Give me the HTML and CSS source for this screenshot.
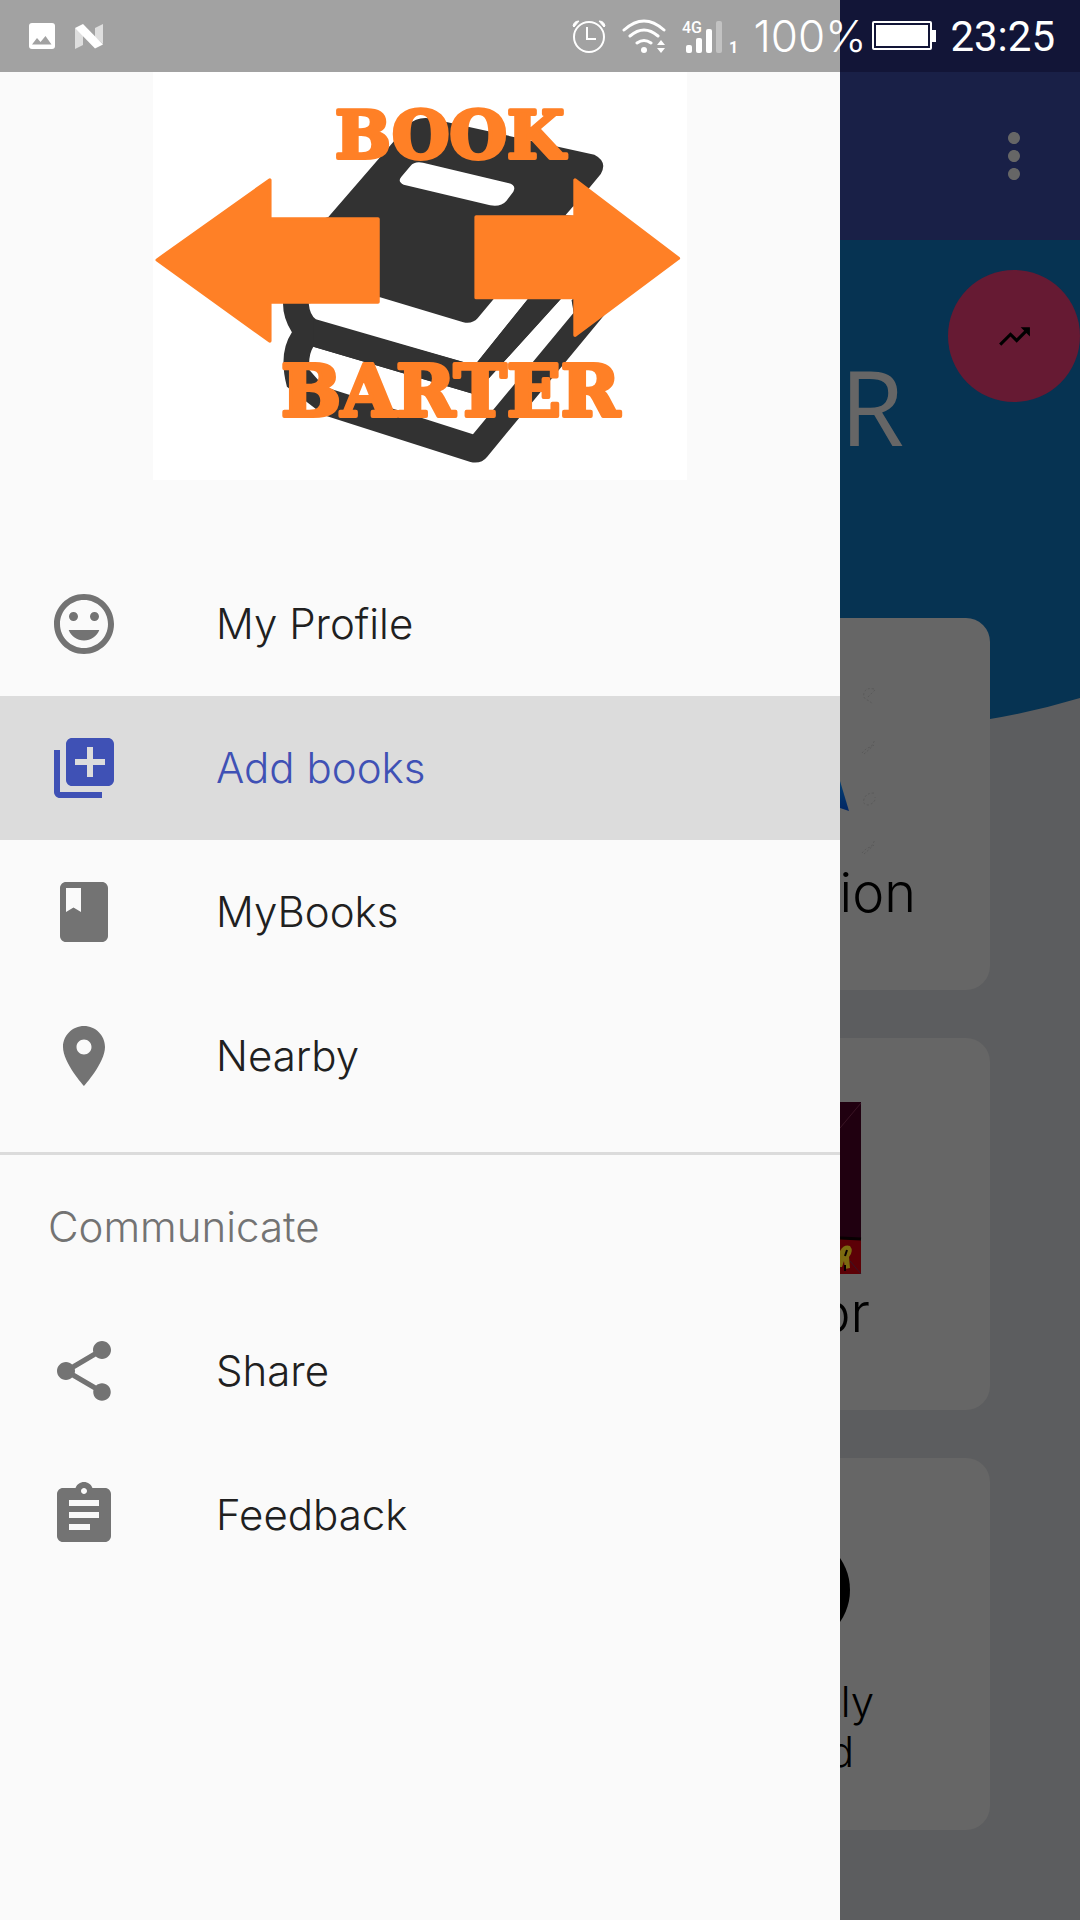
FILE: index.html
```html
<!DOCTYPE html>
<html lang="en">
<head>
  <meta charset="utf-8">
  <meta name="viewport" content="width=device-width, initial-scale=1">
  <title>Book Barter</title>
  <link rel="stylesheet" href="styles.css">
</head>
<body>
  <div class="screen">
    <header class="status">
      <div class="status-group status-left">
        <svg width="26" height="26" viewBox="0 0 26 26" aria-hidden="true">
          <rect width="26" height="26" rx="3" fill="#fff"/>
          <path d="M3 21.500L8 15l3.500 4 5-6 6 8.500z" fill="#a2a2a2"/>
        </svg>
        <svg width="28" height="25" viewBox="0 0 28 25" aria-hidden="true">
          <path d="M0 4l8 5v12l-8 4zM20 4l8-4v20l-8-7z" fill="#dedede"/>
          <path d="M0 4l8-4 20 20.500-8 4z" fill="#fff"/>
        </svg>
      </div>
      <div class="status-group status-right">
        <svg width="34" height="36" viewBox="0 0 34 36" fill="none" stroke="#fff" aria-hidden="true">
          <circle cx="17" cy="19" r="15" stroke-width="2"/>
          <path d="M15 9v12h9" stroke-width="2"/>
          <path d="M1 8q1-5 6-5l-5 6zM33 8q-1-5-6-5l5 6z" fill="#fff" stroke-width="1"/>
        </svg>
        <svg class="wifi" width="44" height="36" viewBox="0 0 44 36" fill="none" stroke="#fff" stroke-width="3" stroke-linecap="round" aria-hidden="true">
          <path d="M2 12q20-18 40 0M8 18q14-12 28 0M15 25q7-5 14 0"/>
          <circle cx="22" cy="32" r="3" fill="#fff" stroke="none"/>
          <path d="M35 27l4-5 4 5zM35 30l4 5 4-5z" fill="#fff" stroke="none"/>
        </svg>
        <svg class="signal" width="60" height="36" viewBox="0 0 60 36" fill="#fff" aria-hidden="true">
          <text class="net-label" x="0" y="15">4G</text>
          <rect x="4" y="27" width="6" height="8" rx="2"/>
          <rect x="14" y="20" width="6" height="15" rx="2"/>
          <rect x="24" y="11" width="6" height="24" rx="2"/>
          <rect x="34" y="3" width="6" height="32" rx="2" opacity=".35"/>
          <text class="sim-label" x="47" y="35">1</text>
        </svg>
        <span class="battery-text">100%</span>
        <svg class="battery" width="64" height="30" viewBox="0 0 64 30" aria-hidden="true">
          <rect x="1" y="1" width="58" height="27" rx="1" fill="#121537" stroke="#fff" stroke-width="2"/>
          <path d="M4 4h52v21H4zM60 9h4v12h-4z" fill="#fff"/>
        </svg>
        <time class="clock">23:25</time>
      </div>
    </header>

    <nav class="drawer" aria-label="Main">
      <svg class="logo" viewBox="0 0 534 408" role="img" aria-label="Book Barter logo">
        <rect width="534" height="408" fill="#fff"/>
        <g transform="scale(.3571 .3333) translate(-36 -6)">
          <path fill="#323232" d="M527 441L750 165Q775 140 810 145L1272 254Q1310 275 1290 312L1195 435L1240 440V700L1300 735L972 1160Q955 1183 925 1176L515 1036L411 950Q386 850 425 787Q400 745 400 700L500 450z"/>
          <path fill="#fff" d="M757 288Q768 273 792 278L1030 339Q1055 345 1045 365L1026 392Q1010 412 980 406L738 344Q720 335 731 321z"/>
          <path fill="#fff" d="M472 700L672 682L905 757Q930 763 945 745L990 687H1086L937 886L492 748Q475 735 472 700z"/>
          <path fill="#fff" d="M485 830L936 973L1178 687L1210 687L1214 728L932 1093L515 950L474 900Q470 855 485 830z"/>
          <path fill="#323232" d="M485 750L937 886L1086 687H1178L936 973L485 830zM1214 728L1208 690H1280V755L1220 800z"/>
          <path fill="#fff" d="M1191 436L1214 407V436z"/>
          <path fill="#ff8026" stroke="#ff8026" stroke-width="10" stroke-linejoin="round" d="M48 570L363 330V447H666V696H363V813zM1507 565L1218 330V441H941V683H1218V796z"/>
        </g>
        <text class="logo-text" x="182" y="86">BOOK</text>
        <text class="logo-text logo-text-large" x="128" y="344">BARTER</text>
      </svg>

      <ul class="menu">
        <li><a class="item" href="#profile">
          <svg class="icon" viewBox="0 0 24 24" aria-hidden="true"><path d="M11.990 2C6.470 2 2 6.480 2 12s4.470 10 9.990 10C17.520 22 22 17.520 22 12S17.520 2 11.990 2zM12 20c-4.420 0-8-3.580-8-8s3.580-8 8-8 8 3.580 8 8-3.580 8-8 8zm3.500-9c.830 0 1.500-.670 1.500-1.500S16.330 8 15.500 8 14 8.670 14 9.500s.670 1.500 1.500 1.500zm-7 0c.830 0 1.500-.670 1.500-1.500S9.330 8 8.500 8 7 8.670 7 9.500 7.670 11 8.500 11zM12 17.500c2.330 0 4.310-1.460 5.110-3.500H6.890c.8 2.040 2.780 3.500 5.110 3.500z"/></svg>
          <span>My Profile</span></a></li>
        <li><a class="item selected" href="#add" aria-current="page">
          <svg class="icon" viewBox="0 0 24 24" aria-hidden="true"><path d="M4 6H2v14c0 1.100.9 2 2 2h14v-2H4V6zm16-4H8c-1.100 0-2 .9-2 2v12c0 1.100.9 2 2 2h12c1.100 0 2-.9 2-2V4c0-1.100-.9-2-2-2zm-1 9h-4v4h-2v-4H9V9h4V5h2v4h4v2z"/></svg>
          <span>Add books</span></a></li>
        <li><a class="item" href="#books">
          <svg class="icon" viewBox="0 0 24 24" aria-hidden="true"><path d="M18 2H6c-1.100 0-2 .9-2 2v16c0 1.100.9 2 2 2h12c1.100 0 2-.9 2-2V4c0-1.100-.9-2-2-2zM6 4h5v8l-2.500-1.500L6 12V4z"/></svg>
          <span>MyBooks</span></a></li>
        <li><a class="item" href="#nearby">
          <svg class="icon" viewBox="0 0 24 24" aria-hidden="true"><path d="M12 2C8.130 2 5 5.130 5 9c0 5.250 7 13 7 13s7-7.750 7-13c0-3.870-3.130-7-7-7zm0 9.500c-1.380 0-2.500-1.120-2.500-2.500s1.120-2.500 2.500-2.500 2.500 1.120 2.500 2.500-1.120 2.500-2.500 2.500z"/></svg>
          <span>Nearby</span></a></li>
      </ul>

      <h2 class="subheader">Communicate</h2>
      <ul class="menu-secondary">
        <li><a class="item" href="#share">
          <svg class="icon" viewBox="0 0 24 24" aria-hidden="true"><path d="M18 16.080c-.760 0-1.440.3-1.960.770L8.910 12.700c.050-.230.090-.460.090-.7s-.040-.470-.090-.7l7.050-4.110c.540.5 1.250.810 2.040.810 1.660 0 3-1.340 3-3s-1.340-3-3-3-3 1.340-3 3c0 .240.040.470.090.7L8.040 9.810C7.500 9.310 6.790 9 6 9c-1.660 0-3 1.340-3 3s1.340 3 3 3c.790 0 1.500-.310 2.040-.810l7.120 4.160c-.050.210-.080.430-.080.650 0 1.610 1.310 2.920 2.920 2.920s2.920-1.310 2.920-2.920-1.310-2.920-2.920-2.920z"/></svg>
          <span>Share</span></a></li>
        <li><a class="item" href="#feedback">
          <svg class="icon" viewBox="0 0 24 24" aria-hidden="true"><path d="M19 3h-4.180C14.400 1.840 13.300 1 12 1c-1.300 0-2.400.840-2.820 2H5c-1.100 0-2 .9-2 2v14c0 1.100.9 2 2 2h14c1.100 0 2-.9 2-2V5c0-1.100-.9-2-2-2zm-7 0c.550 0 1 .450 1 1s-.450 1-1 1-1-.450-1-1 .450-1 1-1zm2 14H7v-2h7v2zm3-4H7v-2h10v2zm0-4H7V7h10v2z"/></svg>
          <span>Feedback</span></a></li>
      </ul>
    </nav>

    <main class="app">
      <div class="toolbar">
        <button class="overflow" type="button" aria-label="More options">
          <svg width="72" height="72" viewBox="0 0 24 24" aria-hidden="true"><path d="M12 8c1.100 0 2-.9 2-2s-.9-2-2-2-2 .9-2 2 .9 2 2 2zm0 2c-1.100 0-2 .9-2 2s.9 2 2 2 2-.9 2-2-.9-2-2-2zm0 6c-1.100 0-2 .9-2 2s.9 2 2 2 2-.9 2-2-.9-2-2-2z"/></svg>
        </button>
      </div>
      <div class="page">
        <svg class="wave" viewBox="0 0 240 520" preserveAspectRatio="none" aria-hidden="true">
          <path d="M0 0H240V458Q197 471 150 479Q75 492 0 500z" fill="#063352"/>
        </svg>
        <div class="content">
          <div class="hero">
            <h1 class="title">R</h1>
            <button class="fab" type="button" aria-label="Trending">
              <svg width="37" height="37" viewBox="0 0 24 24" aria-hidden="true"><path d="M16 6l2.290 2.290-4.880 4.880-4-4L2 16.590 3.410 18l6-6 4 4 6.300-6.290L22 12V6z"/></svg>
            </button>
          </div>
          <div class="cards">
            <article class="card">
              <svg class="art" viewBox="0 0 150 200" aria-hidden="true">
                <defs><linearGradient id="blade" x1="0" y1="0" x2="0" y2="1"><stop offset="0" stop-color="#034073"/><stop offset="1" stop-color="#032663"/></linearGradient></defs>
                <path d="M0 124L9 154L0 151z" fill="url(#blade)"/>
                <g fill="none" stroke="#5a5a5a" stroke-width="1" stroke-dasharray="2 2">
                  <path d="M34 32q-8-2-10 4t6 8l2 3M35 33l-8 8M22 96l5-5 4-1 4-7M24 97l10-9M34 136q-8 0-10 6t5 6q7-3 6-8M22 196l5-5 4-1 4-7M24 197l10-9"/>
                </g>
              </svg>
              <h2 class="label label-wide">ion</h2>
            </article>
            <article class="card">
              <svg class="art" viewBox="0 0 150 200" aria-hidden="true">
                <path d="M0 25h21v172H0z" fill="#200010"/>
                <path d="M0 162h21v35H0z" fill="#5c0006"/>
                <path d="M0 161l21 1" stroke="#080002" stroke-width="3"/>
                <path d="M0 51L21 26M10 184l11 13" stroke="#3a1425" stroke-width="1"/>
                <path d="M0 174Q4 167 10 169Q14 174 9 180L10 191L5 192L4 184L2 190H0z" fill="#7c6a10"/>
                <path d="M7 173l-2 6M5 188v6" stroke="#080002" stroke-width="2"/>
              </svg>
              <h2 class="label label-medium">or</h2>
            </article>
            <article class="card">
              <svg class="art art-short" viewBox="0 0 150 180" aria-hidden="true"><circle cx="-46" cy="93" r="56"/></svg>
              <h2 class="label label-small"><span class="line">tly</span><span class="line line-short">d</span></h2>
            </article>
          </div>
        </div>
      </div>
    </main>
  </div>
</body>
</html>
```
FILE: styles.css
```css
* {
  box-sizing: border-box;
}

body {
  margin: 0;
  background: #fafafa;
  font-family: Inter, Roboto, "Liberation Sans", sans-serif;
  font-weight: 300;
}

h1,
h2 {
  margin: 0;
  font-weight: 300;
}

ul {
  margin: 0;
  padding: 0;
  list-style: none;
}

button {
  padding: 0;
  border: 0;
  background: none;
}

svg {
  display: block;
  flex-shrink: 0;
}

.screen {
  display: grid;
  grid-template-columns: minmax(0, 1fr) 240px;
  grid-template-rows: 72px 1fr;
  min-height: 100vh;
}

/* Status bar: its tint follows the drawer edge */
.status {
  grid-column: 1 / -1;
  display: flex;
  justify-content: space-between;
  padding: 0 25px 0 29px;
  background: linear-gradient(to right, #a2a2a2 calc(100% - 240px), #121537 0);
  color: #fff;
  font-family: Roboto, sans-serif;
  font-weight: 300;
}

.status-group {
  display: flex;
  align-items: center;
}

.status-left {
  gap: 20px;
}

.wifi,
.signal {
  margin-left: 16px;
}

.net-label {
  font-size: 16px;
  font-weight: 500;
}

.sim-label {
  font-size: 16px;
  font-weight: 700;
}

.battery-text {
  margin-left: 12px;
  font-family: Inter, sans-serif;
  font-size: 44px;
}

.battery {
  margin: 0 14px 0 6px;
}

.clock {
  font-size: 42px;
  font-weight: 400;
}

/* Drawer */
.drawer {
  background: #fafafa;
}

.logo {
  width: 534px;
  max-width: 100%;
  margin: 0 auto 72px;
}

.logo-text {
  fill: #ff8026;
  stroke: #ff8026;
  stroke-width: 4px;
  stroke-linejoin: round;
  font-family: "DejaVu Serif", serif;
  font-size: 66px;
  font-weight: 700;
}

.logo-text-large {
  font-size: 71px;
}

.menu {
  padding-bottom: 24px;
  border-bottom: 3px solid #dbdbdb;
}

.item {
  display: flex;
  align-items: center;
  gap: 96px;
  height: 144px;
  padding: 0 48px;
  color: #202020;
  font-size: 42px;
  text-decoration: none;
}

.item span {
  padding-bottom: 2px;
}

.icon {
  width: 72px;
  height: 72px;
  fill: #737373;
}

.selected {
  background: #dcdcdc;
  color: #3f51b5;
}

.selected .icon {
  fill: currentColor;
}

.subheader {
  padding: 0 48px;
  color: #737373;
  font-size: 42px;
  line-height: 144px;
}

/* Dimmed screen behind the drawer */
.app {
  overflow: hidden;
  background: #5c5d5f;
}

.toolbar {
  display: flex;
  align-items: center;
  justify-content: flex-end;
  height: 168px;
  padding-right: 30px;
  background: #192047;
}

.overflow svg {
  fill: #666;
}

.page {
  display: grid;
  grid-template-columns: minmax(0, 1fr);
}

.wave,
.content {
  grid-area: 1 / 1;
}

.wave {
  width: 100%;
  height: 520px;
}

.content {
  padding: 30px 0 90px;
}

.hero {
  display: flex;
  justify-content: space-between;
  align-items: flex-start;
  height: 348px;
}

.title {
  margin-top: 84px;
  color: #666;
  font-family: "Open Sans", sans-serif;
  font-size: 104px;
  font-weight: 400;
  line-height: 104px;
}

.fab {
  display: grid;
  flex-shrink: 0;
  place-items: center;
  width: 132px;
  height: 132px;
  border-radius: 50%;
  background: #661a33;
}

.cards {
  display: grid;
  grid-template-columns: minmax(0, 1fr);
  gap: 48px;
  padding-right: 90px;
}

.card {
  height: 372px;
  padding-top: 39px;
  border-radius: 0 24px 24px 0;
  background: #666;
}

.art {
  width: 150px;
  height: 200px;
}

.art-short {
  height: 180px;
}

.label {
  display: flex;
  justify-content: flex-end;
  color: #000;
  font-size: 54px;
  line-height: 72px;
}

.label-wide {
  padding-right: 74px;
}

.label-medium {
  padding-right: 120px;
}

.label-small {
  flex-direction: column;
  align-items: flex-end;
  padding-right: 116px;
  font-size: 42px;
  line-height: 50px;
}

.line-short {
  padding-right: 20px;
}
```
